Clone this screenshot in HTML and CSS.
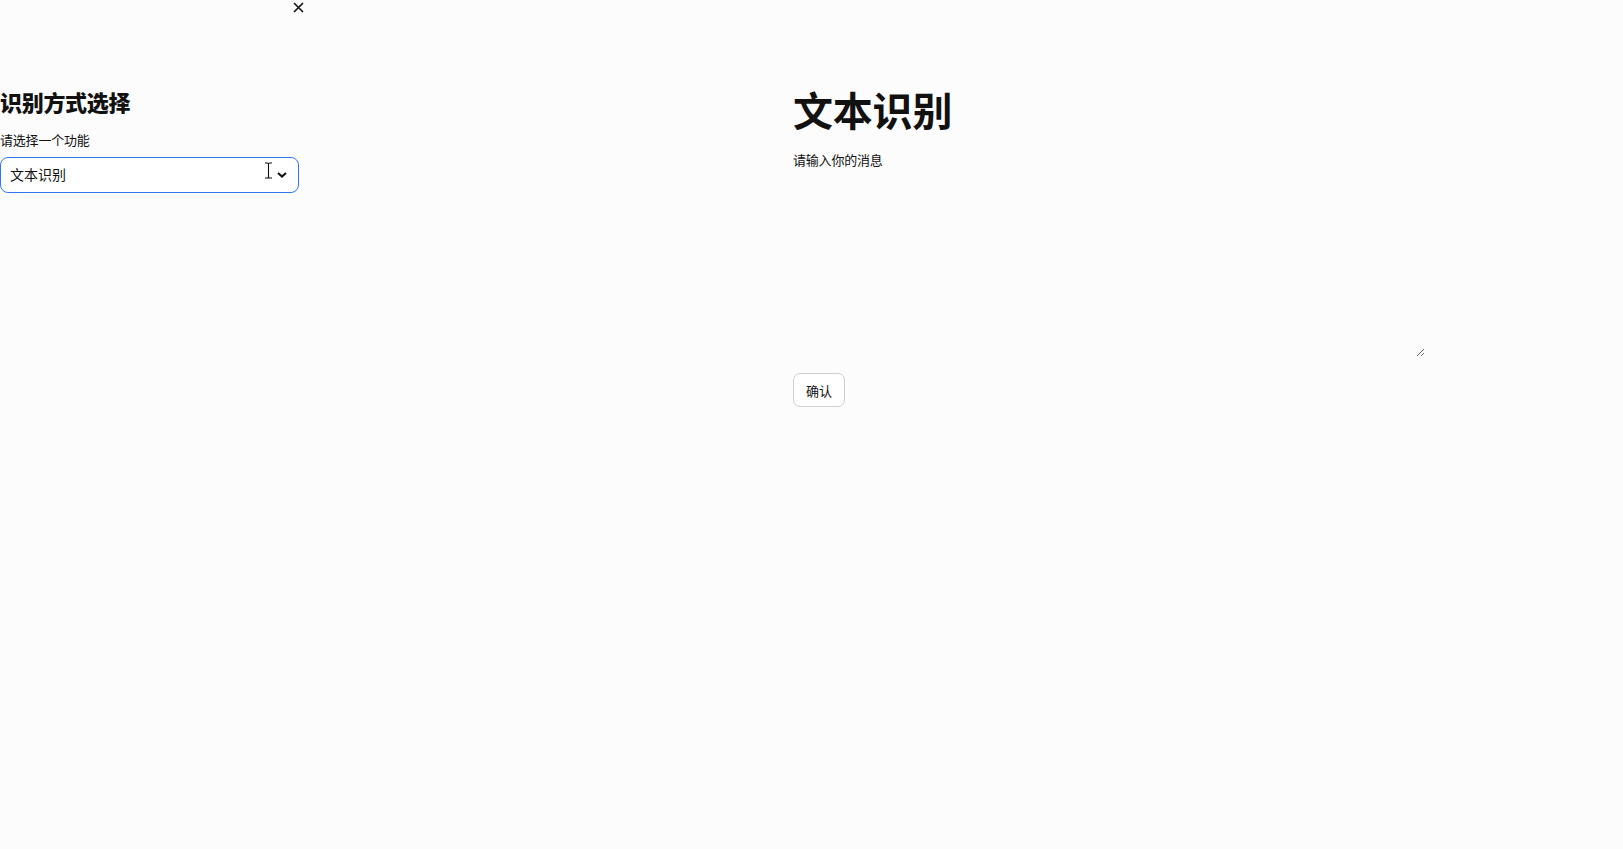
FILE: index.html
```html
<!DOCTYPE html>
<html lang="zh">
<head>
<meta charset="utf-8">
<title>文本识别</title>
<link rel="stylesheet" href="styles.css">
</head>
<body>
<div class="app">
  <aside class="sidebar">
    <div class="sidebar-top">
      <button class="close-btn" aria-label="关闭">
        <svg width="11" height="11" viewBox="0 0 11 11"><path d="M1 1L10 10M10 1L1 10" stroke="#111" stroke-width="1.6" fill="none"/></svg>
      </button>
    </div>
    <h2 class="side-title">识别方式选择</h2>
    <label class="side-label">请选择一个功能</label>
    <div class="select">
      <span class="select-value">文本识别</span>
      <svg class="chevron" width="10" height="6" viewBox="0 0 10 6"><path d="M1 1L5 4.6L9 1" stroke="#111" stroke-width="2" fill="none"/></svg>
      <svg class="ibeam" width="9" height="17" viewBox="0 0 9 17"><path d="M1 1H3.5Q4.5 1 4.5 2V15Q4.5 16 3.5 16H1M8 1H5.5Q4.5 1 4.5 2M8 16H5.5Q4.5 16 4.5 15" stroke="#111" stroke-width="1.1" fill="none"/></svg>
    </div>
  </aside>
  <main class="main">
    <h1 class="main-title">文本识别</h1>
    <label class="main-label">请输入你的消息</label>
    <textarea class="message"></textarea>
    <button class="confirm">确认</button>
  </main>
</div>
</body>
</html>
```

FILE: styles.css
```css
html, body {
  margin: 0;
  padding: 0;
  background: #fcfcfc;
  font-family: "Noto Sans CJK SC", "Noto Sans", sans-serif;
  color: #111;
}

.app {
  display: grid;
  grid-template-columns: 299px 1fr;
  min-height: 849px;
}

.sidebar {
  display: flex;
  flex-direction: column;
}

.sidebar-top {
  display: flex;
  justify-content: flex-end;
  height: 16px;
  margin-right: -5px;
}

.close-btn {
  border: none;
  background: transparent;
  padding: 0;
  margin: 0;
  margin-top: 2px;
  width: 11px;
  height: 11px;
  display: flex;
}

.side-title {
  margin: 70px 0 0 0;
  font-size: 22px;
  line-height: 30px;
  font-weight: 900;
  letter-spacing: -0.3px;
}

.side-label {
  margin-top: 15px;
  font-size: 13px;
  line-height: 18px;
  letter-spacing: -0.2px;
}

.select {
  position: relative;
  margin-top: 8px;
  height: 36px;
  box-sizing: border-box;
  border: 1px solid #3176f0;
  border-radius: 8px;
  background: #fff;
  display: flex;
  align-items: center;
  padding-left: 9px;
  padding-bottom: 2px;
}

.select-value {
  font-size: 14px;
  line-height: 20px;
}

.chevron {
  position: absolute;
  right: 11px;
  top: 14px;
}

.ibeam {
  position: absolute;
  left: 263px;
  top: 4px;
}

.main {
  padding-left: 494px;
  display: flex;
  flex-direction: column;
  align-items: flex-start;
}

.main-title {
  margin: 81px 0 0 0;
  font-size: 40px;
  line-height: 56px;
  font-weight: 700;
  letter-spacing: -0.2px;
}

.main-label {
  margin-top: 14px;
  font-size: 13px;
  line-height: 18px;
  letter-spacing: -0.2px;
}

.message {
  width: 632px;
  height: 180px;
  box-sizing: border-box;
  border: none;
  background: transparent;
  outline: none;
  margin: 8px 0 0 0;
  display: block;
}

.confirm {
  margin-top: 16px;
  height: 34px;
  padding: 0 12px;
  border: 1px solid #cfcfcf;
  border-radius: 7px;
  background: #fff;
  font-family: "Noto Sans CJK SC", sans-serif;
  font-size: 13px;
  color: #111;
}
```
